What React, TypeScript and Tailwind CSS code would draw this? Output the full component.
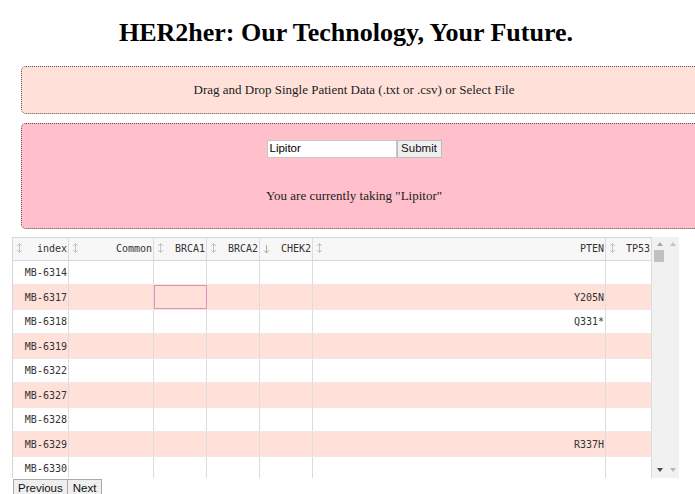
import React from "react";

interface Col {
  key: string;
  w: string;
  sort: "both" | "desc";
}

interface Row {
  id: string;
  pten?: string;
}

const cols: Col[] = [
  { key: "index", w: "w-[56px]", sort: "both" },
  { key: "Common", w: "w-[85px]", sort: "both" },
  { key: "BRCA1", w: "w-[53px]", sort: "both" },
  { key: "BRCA2", w: "w-[53px]", sort: "both" },
  { key: "CHEK2", w: "w-[53px]", sort: "desc" },
  { key: "PTEN", w: "w-[293px]", sort: "both" },
  { key: "TP53", w: "w-[46px]", sort: "both" },
];

const rows: Row[] = [
  { id: "MB-6314" },
  { id: "MB-6317", pten: "Y205N" },
  { id: "MB-6318", pten: "Q331*" },
  { id: "MB-6319" },
  { id: "MB-6322" },
  { id: "MB-6327" },
  { id: "MB-6328" },
  { id: "MB-6329", pten: "R337H" },
  { id: "MB-6330" },
];

const SortIcon = ({ kind }: { kind: "both" | "desc" }) =>
  kind === "both" ? (
    <svg width="7" height="12" viewBox="0 0 7 12" className="shrink-0">
      <path d="M3.5 1.5V10.5M1 4L3.5 1.5L6 4M1 8L3.5 10.5L6 8" fill="none" stroke="#c0c0c0" strokeWidth="1" />
    </svg>
  ) : (
    <svg width="7" height="12" viewBox="0 0 7 12" className="shrink-0">
      <path d="M3.5 3V11M1 8.5L3.5 11L6 8.5" fill="none" stroke="#a8a8a8" strokeWidth="1" />
    </svg>
  );

const Tri = ({ up, color }: { up?: boolean; color: string }) => (
  <svg width="6" height="4" viewBox="0 0 6 4">
    <path d={up ? "M0 4L3 0L6 4Z" : "M0 0L6 0L3 4Z"} fill={color} />
  </svg>
);

const App = () => {
  return (
    <div className="w-[695px] h-[494px] overflow-hidden bg-white text-[#222] font-['Liberation_Serif','Times_New_Roman',serif]">
      {/* Title */}
      <h1 className="pt-[18px] pr-[3px] text-center text-[26px] leading-[30px] font-bold text-black">
        HER2her: Our Technology, Your Future.
      </h1>

      {/* Drop zone */}
      <div className="mt-[18px] ml-[21px] w-[700px] pr-[34px] h-[48px] border border-dotted border-[#555] rounded-[5px] bg-[#ffe1da] flex items-center justify-center text-[13px] leading-[15px] pb-[1px]">
        Drag and Drop Single Patient Data (.txt or .csv) or Select File
      </div>

      {/* Medication box */}
      <div className="mt-[9px] ml-[21px] w-[700px] pr-[34px] h-[106px] border border-dotted border-[#555] rounded-[5px] bg-[#ffc0cb] flex flex-col items-center pt-[16px]">
        <div className="flex h-[18px] font-['Liberation_Sans',Arial,sans-serif] text-[11.5px]">
          <div className="w-[130px] h-[18px] bg-white border border-[#c8c8c8] pl-[2px] flex items-center text-black">
            Lipitor
          </div>
          <button className="w-[45px] h-[18px] bg-[#efefef] border border-[#bbb] text-[#111] flex items-center justify-center">
            Submit
          </button>
        </div>
        <div className="mt-[30px] text-[13px] leading-[15px]">You are currently taking "Lipitor"</div>
      </div>

      {/* Table */}
      <div className="mt-[8px] ml-[12px] flex font-['DejaVu_Sans_Mono',monospace] text-[10px] text-[#333]">
        <div className="flex flex-col border-l border-[#d6d6d6]">
          <div className="flex h-[24px] bg-[#f7f7f7] border-t border-b border-[#d6d6d6]">
            {cols.map((c) => (
              <div key={c.key} className={`${c.w} h-full border-r border-[#dcdcdc] flex items-center pl-[3px] pr-[1px] pb-[2px]`}>
                <SortIcon kind={c.sort} />
                <span className="ml-auto">{c.key}</span>
              </div>
            ))}
          </div>
          <div className="h-[217px] overflow-hidden">
            {rows.map((r, i) => {
              const pink = i % 2 === 1;
              return (
                <div
                  key={r.id}
                  className={`flex ${pink ? "h-[25px] bg-[#ffe1da]" : "h-[24px] bg-white"} border-b border-[#f0e6e4]`}
                >
                  {cols.map((c) => {
                    let val = "";
                    if (c.key === "index") val = r.id;
                    if (c.key === "PTEN" && r.pten) val = r.pten;
                    const selected = i === 1 && c.key === "BRCA1";
                    return (
                      <div
                        key={c.key}
                        className={`${c.w} h-full border-r border-[#dcdcdc] flex items-center justify-end pr-[1px] ${
                          selected ? "outline outline-1 outline-[#e48fb4] -outline-offset-1" : ""
                        }`}
                      >
                        {val}
                      </div>
                    );
                  })}
                </div>
              );
            })}
          </div>
        </div>

        {/* Scrollbar */}
        <div className="w-[27px] h-[241px] bg-[#f1f1f1] flex flex-col">
          <div className="flex pt-[5px] pl-[5px] gap-[7px]">
            <Tri up color="#a8a8a8" />
            <Tri up color="#c4c4c4" />
          </div>
          <div className="ml-[2px] mt-[4px] w-[10px] h-[12px] bg-[#c1c1c1]" />
          <div className="flex-1" />
          <div className="flex pb-[6px] pl-[5px] gap-[7px]">
            <Tri color="#4a4a4a" />
            <Tri color="#b8b8b8" />
          </div>
        </div>
      </div>

      {/* Pagination */}
      <div className="mt-[1px] ml-[13px] flex font-['Liberation_Sans',Arial,sans-serif] text-[11.5px] text-[#111]">
        <button className="h-[18px] px-[4px] bg-[#efefef] border border-[#aaa] leading-[15px]">Previous</button>
        <button className="h-[18px] px-[5px] bg-[#efefef] border border-[#aaa] border-l-0 leading-[15px]">Next</button>
      </div>
    </div>
  );
};

export default App;
